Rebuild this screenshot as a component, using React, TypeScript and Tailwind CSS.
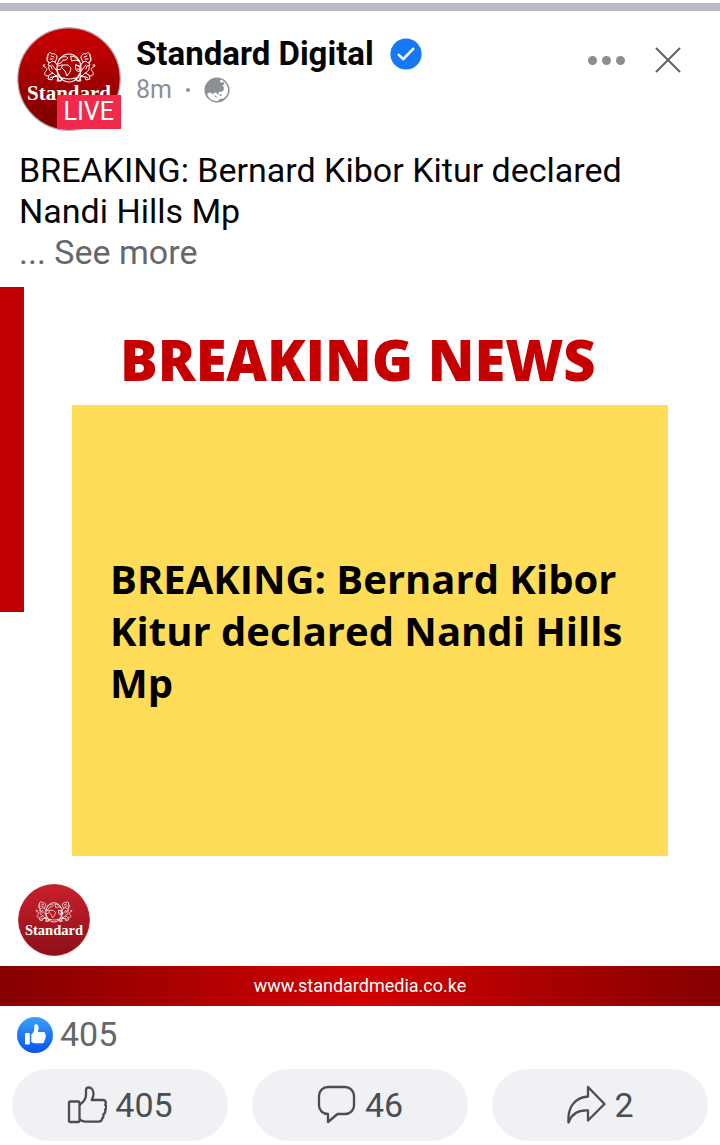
import React from "react";

const Crest: React.FC = () => (
  <g fill="none" stroke="#fff" strokeLinecap="round" strokeLinejoin="round">
    {/* globe in the centre */}
    <ellipse cx="52" cy="41" rx="12" ry="14" strokeWidth="1.2" />
    <path
      d="M42 32c4-3 7-3 9-1l-2 2-3 0-2 3-3 1M54 29c3 0 6 2 8 5l-4-1-3 1zM46 38l5 0 3 3-1 4-3 4-2-5-3-3zM59 38l4 2-1 5-3-2z"
      strokeWidth="1"
    />
    <path d="M33 51c6-4 11 1 19 1s13-5 19-1M40 49l2 5 5-3M64 49l-2 5-5-3" strokeWidth="1" />
    {/* lion on each side, the second one mirrored */}
    {[undefined, "matrix(-1 0 0 1 104 0)"].map((t, i) => (
      <g key={i} transform={t} strokeWidth="1">
        <path d="M31 28c0-3 3-3 4-1 3-1 5 1 5 4l-2 4-3-1-2 2c-3-1-4-4-2-8z" />
        <path d="M34 29l3 1M33 32l3 0M31 30l-1 3 2 3-1 2 3 1 1 3" />
        <path d="M38 35l3 4 4-1M35 38l4 5 5-1M32 39c-1 3 1 6 4 7l-4 2-1 4 4 1 1-3 5-2-1-4" />
        <path d="M36 46l5 5-1 3 4 0 1-2-4-6M31 49c-4 0-4-3-2-5s0-4-2-4l-1-2 2 0" />
      </g>
    ))}
  </g>
);

const Logo: React.FC<{
  id: string;
  className: string;
  from: string;
  to: string;
  rim: string;
}> = ({ id, className, from, to, rim }) => (
  <svg viewBox="0 0 104 104" className={className}>
    <defs>
      <linearGradient id={id} x1="0" y1="0" x2="0" y2="1">
        <stop offset="0" stopColor={from} />
        <stop offset="1" stopColor={to} />
      </linearGradient>
    </defs>
    <circle cx="52" cy="52" r="51.2" fill={`url(#${id})`} stroke={rim} strokeWidth="1.2" />
    <Crest />
    <text
      x="52"
      y="73"
      textAnchor="middle"
      fill="#fff"
      className="font-['Liberation_Serif',serif] text-[21px] font-bold"
    >
      Standard
    </text>
  </svg>
);

const Verified: React.FC = () => (
  <svg viewBox="0 0 32 32" className="size-8">
    <circle cx="16" cy="16" r="15.6" fill="#1877f2" />
    <path
      d="M8.8 16.8l4.4 4.4 10-10.4"
      fill="none"
      stroke="#fff"
      strokeWidth="2.6"
      strokeLinecap="round"
      strokeLinejoin="round"
    />
  </svg>
);

const Globe: React.FC = () => (
  <svg viewBox="0 0 26 26" className="size-[26px]">
    <circle cx="13" cy="13" r="11.8" fill="#fff" stroke="#8c9096" strokeWidth="1.5" />
    <path
      d="M1.200 13C1.200 6 6.500 1.200 13 1.200c2 0 3.500.5 4.500 1L16 3.500l.5 2 3-.5 1 2-2 1.500 1.500 2-.5 3-2.500 1.500-1.500-.5-1 1 .5 2-1.500-.5-2-1.500-2 .5-.5 2-1.500-2-2.500-.5-2 1.500 1.500 4C3 19.500 1.200 16.500 1.200 13z"
      fill="#8c9096"
    />
    <path
      d="M9.500 18l2.500 1 1.500 1.500-1.500 0zM15.500 17.500l2-.5 0 2-1.500 0zM13.500 24.500l2.500-2.500 3.500-.5 2.500-1.500-2.500 3-3 1.500z"
      fill="#8c9096"
    />
  </svg>
);

const ThumbBadge: React.FC = () => (
  <svg viewBox="0 0 36 36" className="size-9">
    <defs>
      <linearGradient id="thumb" x1="0" y1="0" x2="0" y2="1">
        <stop offset="0" stopColor="#36a3f5" />
        <stop offset="1" stopColor="#0b50f5" />
      </linearGradient>
    </defs>
    <circle cx="18" cy="18" r="18" fill="url(#thumb)" />
    <rect x="8" y="16" width="4.800" height="11.500" rx="1" fill="#fff" />
    <path
      d="M14.300 17.500c1.800-1.500 3-3.500 3-5.500V8.800c0-2.200 4.300-2.500 4.300 2.200 0 1.500-.5 2.800-.8 4h5.700c1.600 0 2.300 1.500 1.700 2.600 1 .9.900 2.300 0 3 .6 1.100.1 2.200-.8 2.700.3 1.500-.4 3-2.200 3h-6.500c-1.800 0-3.200-.5-4.400-1.300z"
      fill="#fff"
    />
  </svg>
);

const LikeIcon: React.FC = () => (
  <svg viewBox="0 0 40 40" className="size-10" fill="none" stroke="#4b4d51" strokeWidth="2.3" strokeLinejoin="round">
    <rect x="2" y="16.500" width="10.500" height="20.500" rx="1.500" />
    <path d="M12.500 20c3.300-2.500 6.500-6.500 6.500-10V5c0-1.600 1-2.500 2.500-2.500 3.200 0 5 3 5 6.500 0 2.300-1 4.400-1.700 6H36c2.700 0 3.500 3 2.200 4.800 1.600 1.500 1.300 3.900-.2 5 .8 1.900 0 3.800-1.700 4.500.5 2 0 3.300-1.100 4.200-.2 2-1.500 3.200-3.700 3.200H18c-2.500 0-3.800-1.200-5.500-2.200" />
  </svg>
);

const CommentIcon: React.FC = () => (
  <svg viewBox="0 0 40 40" className="size-10" fill="none" stroke="#4b4d51" strokeWidth="2.3" strokeLinejoin="round">
    <path d="M11 2h17c5 0 9 4 9 9v9.500c0 5-4 8.500-9 8.500h-7.500l-9.500 8v-8c-5 0-9-3.500-9-8.500V11c0-5 4-9 9-9z" />
  </svg>
);

const ShareIcon: React.FC = () => (
  <svg viewBox="0 0 40 40" className="size-10" fill="none" stroke="#4b4d51" strokeWidth="2.3" strokeLinejoin="round">
    <path d="M22 2l16.500 17L22 35.500V25.500C12 25 5.500 29 2.500 37.500 1.500 23 8 12.500 22 11.500z" />
  </svg>
);

const actions = [
  { label: "Like", count: 405, icon: <LikeIcon /> },
  { label: "Comment", count: 46, icon: <CommentIcon /> },
  { label: "Share", count: 2, icon: <ShareIcon /> },
];

export default function App() {
  return (
    <main className="bg-white pt-[3px] pb-1 font-[Roboto,sans-serif] text-[#050505]">
      <div className="h-2 bg-[#b9bdc3]" />

      <header className="flex items-start pt-4 pr-[38px] pl-[17px]">
        <div className="relative shrink-0">
          <Logo id="avatar" className="size-[104px]" from="#cc0000" to="#7a0000" rim="#b3a7b0" />
          <span className="absolute right-0 bottom-0.5 bg-[#f3294c] px-[7px] text-[25px] leading-[34px] text-white">
            LIVE
          </span>
        </div>
        <div className="flex-1 pt-[7px] pl-[15px]">
          <div className="flex items-center gap-4">
            <h1 className="text-[33px] leading-10 font-bold">Standard Digital</h1>
            <Verified />
          </div>
          <div className="flex items-center gap-3.5 text-[25px] leading-8 text-[#8c9096]">
            <span>8m</span>
            <span className="size-1 rounded-full bg-[#8c9096]" />
            <Globe />
          </div>
        </div>
        <div className="flex items-center gap-[29px] pt-[15px]">
          <button aria-label="More options" className="flex h-9 items-center gap-[5px]">
            <span className="size-[9px] rounded-full bg-[#8a8d91]" />
            <span className="size-[9px] rounded-full bg-[#8a8d91]" />
            <span className="size-[9px] rounded-full bg-[#8a8d91]" />
          </button>
          <button aria-label="Close">
            <svg viewBox="0 0 28 28" className="size-7">
              <path d="M2.500 2.500l23 23M25.500 2.500l-23 23" stroke="#606266" strokeWidth="2" strokeLinecap="round" />
            </svg>
          </button>
        </div>
      </header>

      <div className="px-[19px] pt-[19px] pb-3.5 text-[34px] leading-[41px]">
        <p>
          BREAKING: Bernard Kibor Kitur declared
          <br />
          Nandi Hills Mp
        </p>
        <button className="block text-[#65676b]">... See more</button>
      </div>

      <article>
        <div className="flex items-start">
          <div className="h-[325px] w-6 shrink-0 bg-[#c00000]" />
          <div className="flex-1 pr-[52px] pl-12 font-['Open_Sans',sans-serif]">
            <h2 className="pt-[34px] pl-12 text-[56px] leading-[76px] font-extrabold whitespace-nowrap text-[#c60000]">
              BREAKING NEWS
            </h2>
            <div className="mt-2 flex min-h-[451px] items-center bg-[#ffdd59] pr-5 pl-[38px]">
              <p className="text-[40px] leading-[52px] font-bold text-black">
                BREAKING: Bernard Kibor Kitur declared Nandi Hills Mp
              </p>
            </div>
          </div>
        </div>
        <div className="px-[18px] pt-7 pb-2.5">
          <Logo id="brand" className="size-[72px]" from="#c8202c" to="#8c1018" rim="#b01c26" />
        </div>
        <div className="flex h-10 items-center justify-center bg-linear-to-r from-[#850000] via-[#d40000] to-[#850000]">
          <a href="https://www.standardmedia.co.ke" className="text-lg text-white">
            www.standardmedia.co.ke
          </a>
        </div>
      </article>

      <div className="flex items-center gap-[7px] px-[17px] pt-2 text-[34px] leading-[41px] text-[#65676b]">
        <ThumbBadge />
        <span>405</span>
      </div>

      <div className="grid grid-cols-3 gap-6 px-3 pt-3.5">
        {actions.map((a) => (
          <button
            key={a.label}
            aria-label={`${a.label} ${a.count}`}
            className="flex h-[72px] items-center justify-center gap-2 rounded-full bg-[#f0f1f5] text-[34px] text-[#4b4d51]"
          >
            {a.icon}
            <span>{a.count}</span>
          </button>
        ))}
      </div>
    </main>
  );
}
